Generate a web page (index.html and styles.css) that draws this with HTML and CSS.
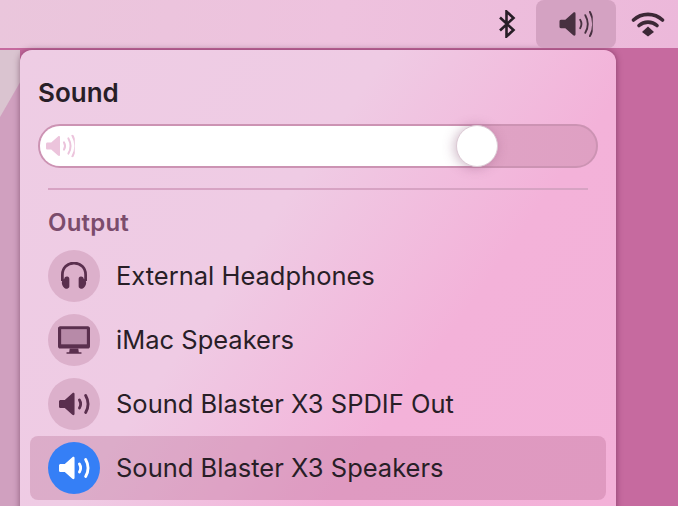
FILE: index.html
```html
<!DOCTYPE html>
<html lang="en">
<head>
    <meta charset="UTF-8">
    <title>Sound</title>
    <link rel="stylesheet" href="styles.css">
</head>
<body>
    <svg class="defs" width="0" height="0">
        <defs>
            <symbol id="speaker" viewBox="0 0 36 28">
                <path class="cone" d="M1.800 9.500h4.700L15 2c1.300-1 2.500-.5 2.500 1v22c0 1.500-1.200 2-2.500 1l-8.500-7.500H1.800C.8 18.500 0 17.700 0 16.700v-5.400c0-1 .8-1.800 1.800-1.800z"/>
                <path class="wave" d="M22.500 9.500c1.700 2.800 1.700 6.200 0 9"/>
                <path class="wave" d="M28 4.500c3.300 5.800 3.300 13.200 0 19"/>
                <path class="wave" d="M33 1c4.500 8 4.500 18 0 26"/>
            </symbol>
            <symbol id="speaker-two" viewBox="0 0 36 28">
                <path class="cone" d="M1.800 9.500h4.700L15 2c1.300-1 2.500-.5 2.500 1v22c0 1.500-1.200 2-2.500 1l-8.500-7.500H1.800C.8 18.500 0 17.700 0 16.700v-5.400c0-1 .8-1.800 1.800-1.800z"/>
                <path class="wave" d="M23 9.500c1.700 2.800 1.700 6.200 0 9"/>
                <path class="wave" d="M30 4.500c3.300 5.800 3.300 13.200 0 19"/>
            </symbol>
        </defs>
    </svg>

    <div class="menubar">
        <div class="status-item status-bt">
            <svg class="bt-icon" viewBox="0 0 18 28"><path d="M2 7.500 15.500 20 8.500 26.500V1.500L15.500 8 2 20.500"/></svg>
        </div>
        <div class="status-item status-active">
            <svg class="bar-speaker" viewBox="0 0 36 28"><use href="#speaker"/></svg>
        </div>
        <div class="status-item status-wifi">
            <svg class="wifi-icon" viewBox="0 0 34 26">
                <path d="M2.500 9C10.500 1.500 23.500 1.500 31.500 9"/>
                <path d="M8 14.500c5-4.500 13-4.500 18 0"/>
                <path class="wifi-dot" d="M17 15.500l6 5.500-6 4.500-6-4.500z"/>
            </svg>
        </div>
    </div>

    <div class="desktop">
        <div class="panel">
            <h1 class="panel-title">Sound</h1>

            <div class="slider">
                <div class="slider-fill">
                    <svg class="slider-icon" viewBox="0 0 36 28"><use href="#speaker"/></svg>
                    <div class="slider-thumb"></div>
                </div>
            </div>

            <div class="divider"></div>

            <div class="section-label">Output</div>

            <div class="device">
                <div class="device-circle">
                    <svg class="headphones" viewBox="1 1 26 26.500">
                        <path class="band" d="M3 19v-6C3 6.500 7.800 2 14 2s11 4.500 11 11v6"/>
                        <path class="fill" d="M5 16.500c0-1.300 1.400-2 2.600-1.800 1.300.2 2 1 2 2.300v7c0 1.300-.8 2-2 2.200C5.500 26.500 3 24.500 2.500 21c-.2-2 .8-3.800 2.500-4.500zM23 16.500c0-1.300-1.400-2-2.600-1.800-1.300.2-2 1-2 2.300v7c0 1.300.8 2 2 2.200 2.100.3 4.600-1.700 5.100-5.200.2-2-.8-3.800-2.500-4.500z"/>
                    </svg>
                </div>
                <span class="device-name">External Headphones</span>
            </div>
            <div class="device">
                <div class="device-circle">
                    <svg class="imac" viewBox="1 1 30 26">
                        <path class="imac-screen" d="M4 4h24v14H4z"/>
                        <path class="imac-body" d="M3 1h26c1.100 0 2 .9 2 2v17c0 1.100-.9 2-2 2H3c-1.100 0-2-.9-2-2V3c0-1.100.9-2 2-2zm1 3v14h24V4z"/>
                        <path class="imac-body" d="M12 22h8l.5 3.500H23V27H9v-1.500h2.500z"/>
                    </svg>
                </div>
                <span class="device-name">iMac Speakers</span>
            </div>
            <div class="device">
                <div class="device-circle">
                    <svg class="device-speaker" viewBox="0 0 36 28"><use href="#speaker-two"/></svg>
                </div>
                <span class="device-name">Sound Blaster X3 SPDIF Out</span>
            </div>
            <div class="device device-selected">
                <div class="device-circle">
                    <svg class="device-speaker" viewBox="0 0 36 28"><use href="#speaker-two"/></svg>
                </div>
                <span class="device-name">Sound Blaster X3 Speakers</span>
            </div>
        </div>
    </div>
</body>
</html>
```

FILE: styles.css
```css
html, body {
    margin: 0;
    height: 100%;
    overflow: hidden;
}
body {
    width: 678px;
    height: 506px;
    font-family: Inter, 'Liberation Sans', sans-serif;
    color: #281e27;
    background: #c66a9f;
}
.defs {
    display: block;
    height: 0;
}
.menubar {
    height: 48px;
    display: flex;
    justify-content: flex-end;
    align-items: flex-start;
    background: linear-gradient(100deg, #eac6dc 0%, #eec2de 50%, #ecb8da 100%);
}
.status-item {
    box-sizing: border-box;
    width: 80px;
    height: 48px;
    display: flex;
    align-items: center;
    justify-content: center;
    border-radius: 8px;
}
.status-bt {
    width: 62px;
    padding-left: 4px;
}
.status-wifi {
    width: 62px;
    padding-left: 2px;
}
.status-active {
    background: #d4a2c2;
}
.cone {
    fill: currentColor;
    stroke: none;
}
.wave {
    fill: none;
    stroke: currentColor;
    stroke-width: var(--wave, 2.500);
    stroke-linecap: round;
}
.bt-icon {
    width: 18px;
    height: 28px;
    fill: none;
    stroke: #281e27;
    stroke-width: 2.600;
}
.bar-speaker {
    width: 36px;
    height: 26px;
    color: #473040;
    --wave: 2;
}
.wifi-icon {
    width: 34px;
    height: 26px;
    fill: none;
    stroke: #3c2836;
    stroke-width: 3.600;
    stroke-linecap: round;
}
.wifi-dot {
    fill: #3c2836;
    stroke: none;
}
.desktop {
    height: 458px;
    padding-left: 20px;
    background:
        linear-gradient(120deg, #dac4d0 33px, #d0a0bf 34px) 0 0 / 20px 100% no-repeat,
        #c66a9f;
}
.panel {
    box-sizing: border-box;
    width: 596px;
    height: 470px;
    margin-top: 2px;
    padding: 28px 10px 0;
    border-radius: 12px 12px 0 0;
    background: linear-gradient(125deg, #eecde4 0%, #efcbe4 40%, #f3b2d9 68%, #f3b1d8 100%);
    box-shadow: 0 0 6px rgba(70, 20, 50, 0.5);
}
.panel-title {
    margin: 0 0 16px 8px;
    font-size: 26px;
    line-height: 30px;
    font-weight: 600;
    color: #281e27;
}
.slider {
    box-sizing: border-box;
    width: 560px;
    height: 44px;
    margin-left: 8px;
    border: 2px solid #cc93b3;
    border-radius: 22px;
    background: linear-gradient(90deg, #e0aecb, #dfa0c3);
}
.slider-fill {
    position: relative;
    box-sizing: border-box;
    width: 457px;
    height: 40px;
    padding: 6px 0 0 6px;
    border-radius: 20px;
    background: linear-gradient(90deg, #fff 92%, #f1edf0 100%);
}
.slider-icon {
    display: block;
    width: 36px;
    height: 28px;
    color: #ecc4dc;
    transform: scale(0.8);
    transform-origin: left center;
}
.slider-thumb {
    position: absolute;
    top: 0;
    right: 0;
    box-sizing: border-box;
    width: 42px;
    height: 42px;
    margin: -1px -1px 0 0;
    border: 1px solid #dccad5;
    border-radius: 50%;
    background: #fff;
    box-shadow: -2px 1px 12px rgba(120, 60, 100, 0.35);
}
.divider {
    height: 2px;
    margin: 20px 18px 0;
    background: #d7a3c3;
}
.section-label {
    margin: 21px 0 9px 18px;
    font-size: 24px;
    line-height: 24px;
    font-weight: 600;
    letter-spacing: 0.2px;
    color: #7b4c6c;
}
.device {
    display: flex;
    align-items: center;
    gap: 16px;
    height: 64px;
    padding-left: 18px;
    border-radius: 8px;
}
.device-selected {
    background: rgba(170, 90, 130, 0.27);
}
.device-circle {
    flex: none;
    display: flex;
    align-items: center;
    justify-content: center;
    width: 52px;
    height: 52px;
    border-radius: 50%;
    background: #dcb0cb;
    color: #5a2f4e;
}
.device-selected .device-circle {
    background: #357ff6;
    color: #fff;
}
.device-name {
    font-size: 25.500px;
    line-height: 28px;
    font-weight: 400;
    color: #281e27;
}
.headphones {
    width: 28px;
    height: 28px;
}
.band {
    fill: none;
    stroke: currentColor;
    stroke-width: 2.600;
}
.fill {
    fill: currentColor;
}
.imac {
    width: 32px;
    height: 28px;
}
.imac-body {
    fill: currentColor;
    fill-rule: evenodd;
}
.imac-screen {
    fill: #b78aa8;
}
.device-speaker {
    width: 32px;
    height: 26px;
    margin-left: 2px;
    --wave: 3.200;
}
```
